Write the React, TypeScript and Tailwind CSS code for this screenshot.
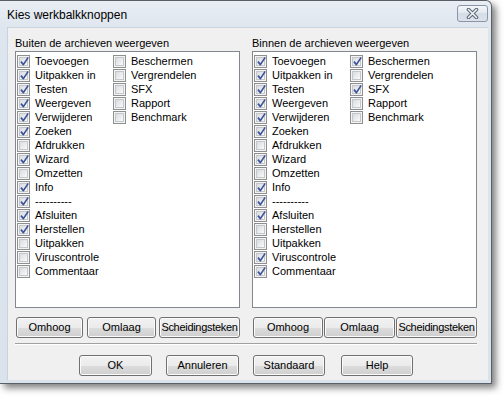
import React from 'react';

type Item = { label: string; checked: boolean };

const leftMain: Item[] = [
    { label: 'Toevoegen', checked: true },
    { label: 'Uitpakken in', checked: true },
    { label: 'Testen', checked: true },
    { label: 'Weergeven', checked: true },
    { label: 'Verwijderen', checked: true },
    { label: 'Zoeken', checked: true },
    { label: 'Afdrukken', checked: false },
    { label: 'Wizard', checked: true },
    { label: 'Omzetten', checked: false },
    { label: 'Info', checked: true },
    { label: '----------', checked: true },
    { label: 'Afsluiten', checked: true },
    { label: 'Herstellen', checked: true },
    { label: 'Uitpakken', checked: false },
    { label: 'Viruscontrole', checked: false },
    { label: 'Commentaar', checked: false },
];

const leftExtra: Item[] = [
    { label: 'Beschermen', checked: false },
    { label: 'Vergrendelen', checked: false },
    { label: 'SFX', checked: false },
    { label: 'Rapport', checked: false },
    { label: 'Benchmark', checked: false },
];

const rightMain: Item[] = leftMain.map((it) => ({
    label: it.label,
    checked: !['Afdrukken', 'Omzetten', 'Herstellen', 'Uitpakken'].includes(it.label),
}));

const rightExtra: Item[] = [
    { label: 'Beschermen', checked: true },
    { label: 'Vergrendelen', checked: false },
    { label: 'SFX', checked: true },
    { label: 'Rapport', checked: false },
    { label: 'Benchmark', checked: false },
];

const CheckBox: React.FC<{ checked: boolean }> = ({ checked }) => (
    <div className="relative w-[13px] h-[13px] shrink-0 border border-[#8e8f8f] bg-[#f4f4f4] p-[1px]">
        <div className="w-full h-full border border-[#c3c6cb] bg-gradient-to-br from-[#d9dbdf] to-[#fafafa]" />
        {checked && (
            <svg className="absolute left-[1px] top-[0px]" width="11" height="11" viewBox="0 0 11 11">
                <path d="M2 5.6 L4.4 8.6 L9.2 1.4" fill="none" stroke="#3d5499" strokeWidth="1.7" strokeLinejoin="round" />
            </svg>
        )}
    </div>
);

const Row: React.FC<{ item: Item }> = ({ item }) => (
    <div className="flex h-[14px] items-start gap-[5px]">
        <CheckBox checked={item.checked} />
        <span className="leading-[12px] whitespace-nowrap text-[#000]">{item.label}</span>
    </div>
);

const Button: React.FC<{ label: string; w: string; tight?: boolean }> = ({ label, w, tight }) => (
    <button
        className={`${w} ${tight ? 'tracking-[-0.3px]' : ''} h-[21px] shrink-0 rounded-[3px] border border-[#707070] bg-[linear-gradient(#f2f2f2,#ebebeb_50%,#dddddd_50%,#cfcfcf)] shadow-[inset_0_0_0_1px_#fbfbfb] text-[11px] leading-[19px] text-black whitespace-nowrap px-0 overflow-hidden`}
    >
        {label}
    </button>
);

const Panel: React.FC<{ title: string; main: Item[]; extra: Item[]; widths: [string, string, string]; gaps: [string, string] }> = ({ title, main, extra, widths, gaps }) => (
    <div className="flex flex-col w-[225px]">
        <div className="h-[13px] leading-[13px] whitespace-nowrap">{title}</div>
        <div className="mt-[1px] h-[257px] border border-[#828790] bg-white pt-[3px] pl-[1px] flex">
            <div className="w-[96px] flex flex-col">
                {main.map((it) => <Row key={it.label} item={it} />)}
            </div>
            <div className="flex flex-col">
                {extra.map((it) => <Row key={it.label} item={it} />)}
            </div>
        </div>
        <div className="mt-[9px] flex pl-[1px]">
            <Button label="Omhoog" w={widths[0]} />
            <div className={gaps[0]} />
            <Button label="Omlaag" w={widths[1]} />
            <div className={gaps[1]} />
            <Button label="Scheidingsteken" w={widths[2]} tight />
        </div>
    </div>
);

export default function App() {
    return (
        <div className="w-[504px] h-[396px] bg-white overflow-hidden font-['Liberation_Sans',Arial,sans-serif] text-[11px] text-black">
            <div className="w-[492px] h-[384px] rounded-tr-[6px] border-r border-b border-t border-[#5a5f66] bg-[linear-gradient(#e9eef4,#dde5ee_30px,#dae2ec)] shadow-[4px_4px_7px_rgba(0,0,0,0.5)] flex flex-col">
                <div className="h-[26px] flex items-center justify-between pl-[7px] pr-[3px]">
                    <span className="text-[12px] text-black pt-[1px]">Kies werkbalkknoppen</span>
                    <div className="w-[31px] h-[17px] mt-[-2px] rounded-[3px] border border-[#8b97a8] bg-[linear-gradient(#f3f6f9,#e4e9ef_50%,#d5dde7_50%,#dbe2ea)] flex items-center justify-center">
                        <svg width="13" height="11" viewBox="0 0 13 11">
                            <path d="M2.5 1.5 L10.5 9.5 M10.5 1.5 L2.5 9.5" stroke="#5d6676" strokeWidth="3.6" strokeLinecap="round" />
                            <path d="M2.5 1.5 L10.5 9.5 M10.5 1.5 L2.5 9.5" stroke="#f2f4f7" strokeWidth="1.6" strokeLinecap="round" />
                        </svg>
                    </div>
                </div>
                <div className="ml-[7px] mr-[3px] mb-[3px] flex-1 bg-[#f0f0f0] border-t border-l border-[#c9d3df] flex flex-col pt-[9px] pl-[7px] pr-[11px]">
                    <div className="flex gap-[12px]">
                        <Panel
                            title="Buiten de archieven weergeven"
                            main={leftMain}
                            extra={leftExtra}
                            widths={['w-[67px]', 'w-[69px]', 'w-[81px]']}
                            gaps={['w-[4px]', 'w-[3px]']}
                        />
                        <Panel
                            title="Binnen de archieven weergeven"
                            main={rightMain}
                            extra={rightExtra}
                            widths={['w-[70px]', 'w-[71px]', 'w-[81px]']}
                            gaps={['w-[1px]', 'w-[1px]']}
                        />
                    </div>
                    <div className="mt-[5px] h-[2px] border-t border-[#a0a0a0] border-b-white border-b" />
                    <div className="mt-[10px] flex pl-[64px]">
                        <Button label="OK" w="w-[73px]" />
                        <div className="w-[14px]" />
                        <Button label="Annuleren" w="w-[73px]" />
                        <div className="w-[14px]" />
                        <Button label="Standaard" w="w-[72px]" />
                        <div className="w-[16px]" />
                        <Button label="Help" w="w-[72px]" />
                    </div>
                </div>
            </div>
        </div>
    );
}
